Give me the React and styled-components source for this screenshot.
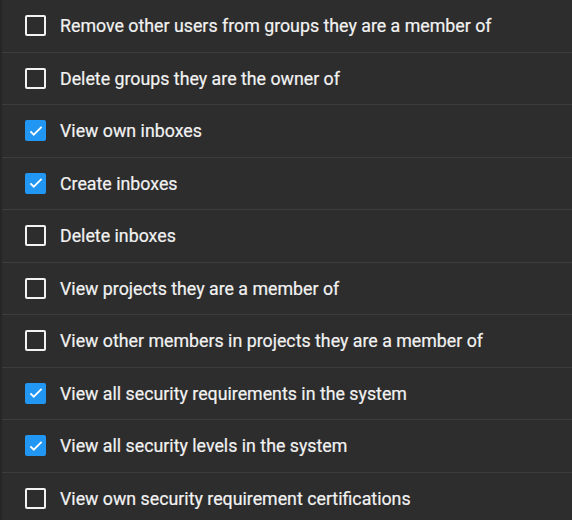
import React, { useState } from 'react'
import styled, { createGlobalStyle } from 'styled-components'

const GlobalStyle = createGlobalStyle`
  html, body {
    margin: 0;
    padding: 0;
    background: #2d2d2d;
  }
  body {
    font-family: Roboto, "Noto Sans", sans-serif;
  }
`

const List = styled.ul`
  margin: 0;
  padding: 0;
  list-style: none;
  background: #2d2d2d;
  border-left: 2px solid #262626;
  min-height: 520px;
`

const Row = styled.li`
  display: flex;
  align-items: center;
  gap: 14px;
  height: 51.5px;
  padding-left: 23px;
  border-bottom: 1px solid #3d3d3d;
  cursor: pointer;
`

const Box = styled.span`
  flex: none;
  box-sizing: border-box;
  width: 21px;
  height: 21px;
  border-radius: 2px;
  display: flex;
  align-items: center;
  justify-content: center;
  border: ${(p) => (p.$checked ? 'none' : '2px solid #f2f2f2')};
  background: ${(p) => (p.$checked ? '#2196f3' : 'transparent')};
`

const Label = styled.span`
  color: #f2f2f2;
  font-size: 17.8px;
  font-weight: 400;
  -webkit-text-stroke: 0.2px #f2f2f2;
`

const items = [
  ['Remove other users from groups they are a member of', false],
  ['Delete groups they are the owner of', false],
  ['View own inboxes', true],
  ['Create inboxes', true],
  ['Delete inboxes', false],
  ['View projects they are a member of', false],
  ['View other members in projects they are a member of', false],
  ['View all security requirements in the system', true],
  ['View all security levels in the system', true],
  ['View own security requirement certifications', false],
]

export default () => {
  const [checked, setChecked] = useState(items.map((i) => i[1]))
  const toggle = (idx) =>
    setChecked(checked.map((c, i) => (i === idx ? !c : c)))

  return (
    <>
      <GlobalStyle />
      <List>
        {items.map(([label], i) => (
          <Row key={label} onClick={() => toggle(i)}>
            <Box $checked={checked[i]}>
              {checked[i] && (
                <svg width='18' height='18' viewBox='0 0 24 24'>
                  <path
                    d='M4.5 12.5l4.5 4.5L19.5 6.5'
                    fill='none'
                    stroke='#fff'
                    strokeWidth='2.4'
                  />
                </svg>
              )}
            </Box>
            <Label>{label}</Label>
          </Row>
        ))}
      </List>
    </>
  )
}
